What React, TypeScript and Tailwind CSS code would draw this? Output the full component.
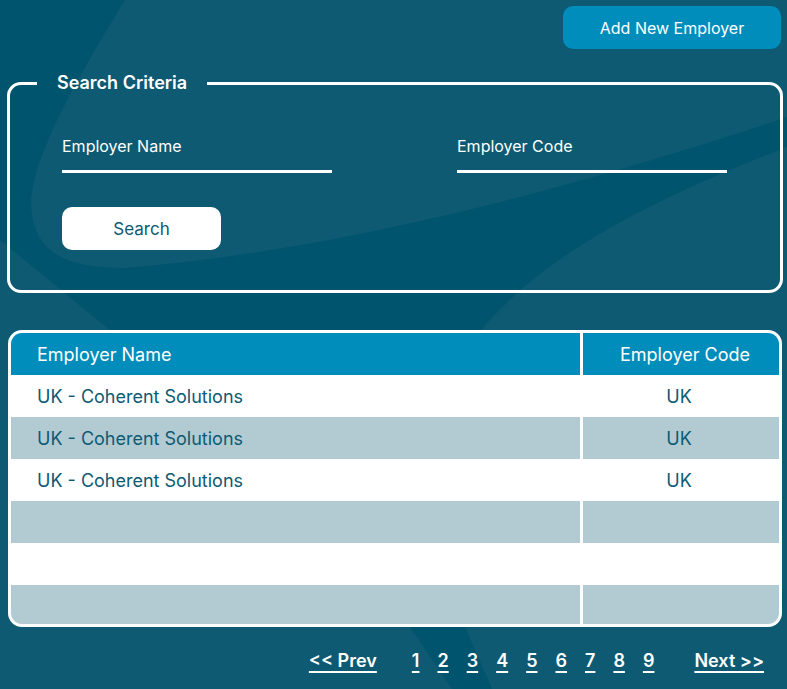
import { useState } from 'react';

const rows = [
  { name: 'UK - Coherent Solutions', code: 'UK' },
  { name: 'UK - Coherent Solutions', code: 'UK' },
  { name: 'UK - Coherent Solutions', code: 'UK' },
  { name: '', code: '' },
  { name: '', code: '' },
  { name: '', code: '' },
];

const pages = ['1', '2', '3', '4', '5', '6', '7', '8', '9'];

function Backdrop() {
  // decorative swooshes behind the page
  return (
    <svg className="absolute inset-0 h-full w-full" viewBox="0 0 787 689" preserveAspectRatio="none">
      <path
        d="M0,0 L125,0 C70,90 25,170 32,215 C38,255 70,268 125,268 C350,250 600,180 787,117 L787,147 C650,200 530,260 470,345 L128,345 L0,240 Z"
        fill="#01546e"
      />
      <path d="M410,627 L465,627 L492,689 L452,689 Z" fill="#01546e" />
    </svg>
  );
}

export default function App() {
  const [name, setName] = useState('');
  const [code, setCode] = useState('');

  return (
    <div className="relative h-[689px] w-full overflow-hidden bg-[#0d5a72] font-['Inter',sans-serif]">
      <Backdrop />

      <div className="relative flex flex-col">
        <div className="flex justify-end pt-[6px] pr-[6px]">
          <button className="h-[43px] w-[218px] rounded-[10px] bg-[#018dbb] text-[16px] text-white">
            Add New Employer
          </button>
        </div>

        <fieldset className="mt-[22px] ml-[7px] mr-[4px] rounded-[14px] border-[3px] border-white pt-[41px] pb-[40px]">
          <legend className="ml-[27px] px-[20px] text-[18px] leading-[24px] font-semibold text-white">
            Search Criteria
          </legend>

          <div className="flex flex-col items-start pl-[52px]">
            <div className="flex gap-[125px]">
              <div className="flex w-[270px] flex-col">
                <label htmlFor="empName" className="text-[16px] leading-[21px] text-white">
                  Employer Name
                </label>
                <input
                  id="empName"
                  value={name}
                  onChange={(e) => setName(e.target.value)}
                  className="h-[16px] border-b-[3px] border-white bg-transparent text-[15px] text-white outline-none"
                />
              </div>
              <div className="flex w-[270px] flex-col">
                <label htmlFor="empCode" className="text-[16px] leading-[21px] text-white">
                  Employer Code
                </label>
                <input
                  id="empCode"
                  value={code}
                  onChange={(e) => setCode(e.target.value)}
                  className="h-[16px] border-b-[3px] border-white bg-transparent text-[15px] text-white outline-none"
                />
              </div>
            </div>

            <button className="mt-[34px] h-[43px] w-[159px] rounded-[10px] bg-white pt-[3px] text-[17px] text-[#0d5a72]">
              Search
            </button>
          </div>
        </fieldset>

        <div className="mt-[37px] ml-[8px] mr-[5px] overflow-hidden rounded-[14px] border-[3px] border-white bg-white">
          <div className="flex h-[42px] items-center text-[18px] text-white">
            <div className="flex h-full flex-1 items-center bg-[#018dbb] pl-[26px]">Employer Name</div>
            <div className="flex h-full w-[199px] items-center justify-center border-l-[3px] border-white bg-[#018dbb] pl-[8px]">
              Employer Code
            </div>
          </div>
          {rows.map((r, i) => (
            <div
              key={i}
              className={`flex text-[18px] text-[#0d5a72] ${i === rows.length - 1 ? 'h-[39px]' : 'h-[42px]'} ${
                i % 2 === 1 ? 'bg-[#b2cbd2]' : 'bg-white'
              }`}
            >
              <div className="flex h-full flex-1 items-center pl-[26px]">{r.name}</div>
              <div className="flex h-full w-[199px] items-center justify-center border-l-[3px] border-white pr-[4px]">
                {r.code}
              </div>
            </div>
          ))}
        </div>

        <div className="mt-[22px] flex items-center justify-end pr-[23px] text-[18px] leading-[24px] font-semibold text-white">
          <a href="#" className="mr-[35px] underline decoration-[1.5px] underline-offset-[4px]">
            &lt;&lt; Prev
          </a>
          <div className="flex gap-[18px]">
            {pages.map((p) => (
              <a key={p} href="#" className="underline decoration-[1.5px] underline-offset-[4px]">
                {p}
              </a>
            ))}
          </div>
          <a href="#" className="ml-[40px] underline decoration-[1.5px] underline-offset-[4px]">
            Next &gt;&gt;
          </a>
        </div>
      </div>
    </div>
  );
}
